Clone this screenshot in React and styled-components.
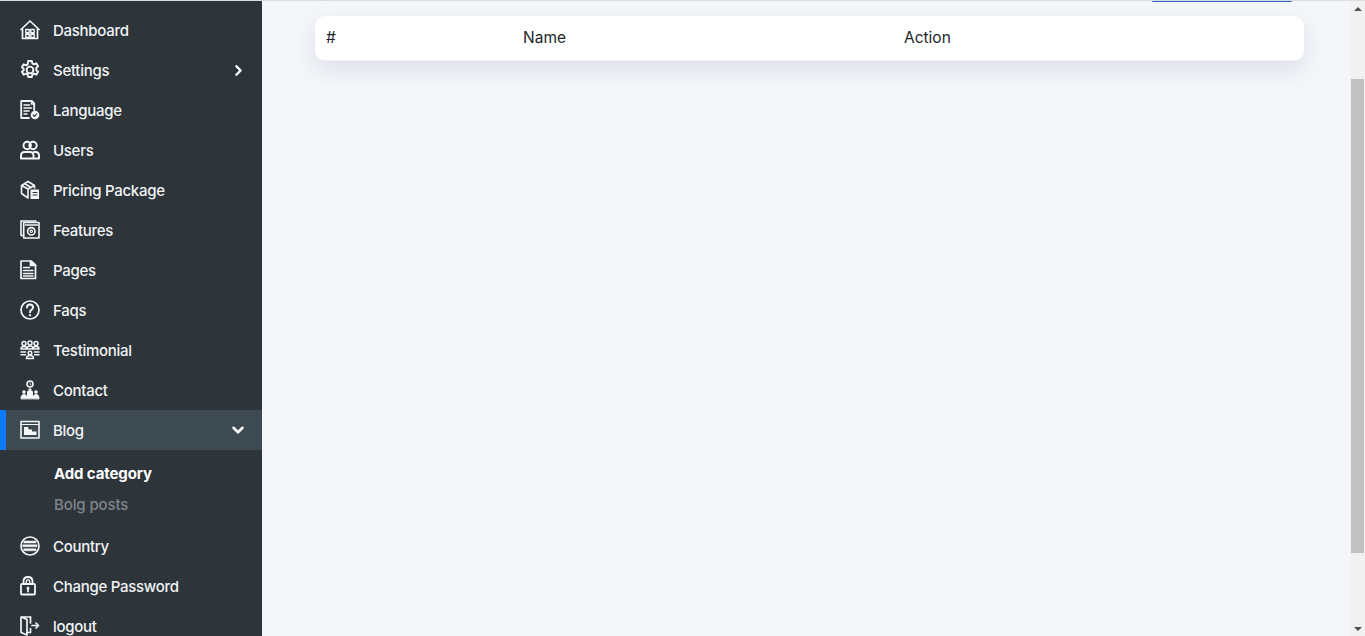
import React from 'react'
import styled, { createGlobalStyle } from 'styled-components'
import { ChevronRight, ChevronDown } from 'lucide-react'

const GlobalStyle = createGlobalStyle`
    html, body {
        margin: 0;
        height: 100%;
        overflow: hidden;
        background: #f4f6fa;
    }
    body {
        font-family: Inter, "Open Sans", "Liberation Sans", sans-serif;
    }
`

const Svg = ({ children }) => (
    <svg width="20" height="20" viewBox="0 0 20 20" fill="none" stroke="#f4f6f7" strokeWidth="1.7" strokeLinejoin="round" strokeLinecap="round">
        {children}
    </svg>
)

const icons = {
    dashboard: (
        <Svg>
            <path d="M1 9.500 L10 1 L19 9.500" />
            <path d="M2.500 9V18.500H17.500V9" />
            <path d="M5.800 9.500h3.400v3.200H5.800zM10.800 9.500h3.400v3.200h-3.400zM5.800 14.300h3.400v3.200H5.800zM10.800 14.300h3.400v3.200h-3.400z" strokeWidth="1.400" />
        </Svg>
    ),
    settings: (
        <Svg>
            <circle cx="10" cy="10" r="3.400" strokeWidth="1.900" />
            <path d="M8.200 1h3.600l.5 2.400 1.700.9 2.300-1 1.800 2.900-1.800 1.600v2.400l1.800 1.600-1.800 2.900-2.300-1-1.700.9-.5 2.400H8.200l-.5-2.400-1.700-.9-2.300 1-1.800-2.900 1.800-1.600V8.800L1.900 7.200l1.800-2.900 2.300 1 1.700-.9z" strokeWidth="1.900" />
        </Svg>
    ),
    language: (
        <Svg>
            <path d="M9 18H1.200V1h10.500l2.500 2.500V10" strokeWidth="1.800" />
            <path d="M11.500 1v3h3" strokeWidth="1.400" />
            <path d="M4 5h5.500M4 8h7.500M4 11h5M4 14h3" strokeWidth="1.500" />
            <circle cx="15" cy="15" r="4.300" fill="#f4f6f7" stroke="none" />
            <path d="M13.200 15l1.300 1.300 2.300-2.400" stroke="#2d353c" strokeWidth="1.100" />
        </Svg>
    ),
    users: (
        <Svg>
            <circle cx="7.200" cy="5.500" r="3.700" strokeWidth="2" />
            <circle cx="13" cy="5.500" r="3.700" strokeWidth="2" />
            <path d="M1 18.500v-2.700c0-2.200 1.500-3.800 3.500-3.800h5.500c2 0 3.500 1.600 3.500 3.800v2.700z" strokeWidth="2" />
            <path d="M14 12h1.500c2 0 3.500 1.600 3.500 3.800v2.700h-5" strokeWidth="2" />
        </Svg>
    ),
    pricing: (
        <Svg>
            <path d="M1.500 5.500L8 1.500l6.500 4v2.500M1.500 5.500v8L8 18M1.500 5.500L8 9v9M8 9l6.500-3.500M4.500 3.500l6.500 4" strokeWidth="1.600" />
            <rect x="10.500" y="9.500" width="8.500" height="9.500" fill="#f4f6f7" stroke="none" />
            <path d="M13 12.500h4M13 15h4" stroke="#2d353c" strokeWidth="1" />
        </Svg>
    ),
    features: (
        <Svg>
            <path d="M3.700 2.500h15.300v15.500H3.700z" strokeWidth="1.600" />
            <path d="M1 1v14.500h2.700M1 1h15" strokeWidth="1.600" />
            <path d="M5.500 5h12" strokeWidth="1.400" />
            <circle cx="11.300" cy="11.300" r="3.700" strokeWidth="1.600" />
            <circle cx="11.300" cy="11.300" r="1.200" strokeWidth="1.100" />
        </Svg>
    ),
    pages: (
        <Svg>
            <path d="M1 1h10l4.500 4v13.500H1z" />
            <path d="M10.500 1v4.500h5" fill="#f4f6f7" />
            <path d="M3.500 7.500h6M3.500 10.500h9.500M3.500 13.500h9.500M3.500 16h9.500" strokeWidth="1.500" />
        </Svg>
    ),
    faqs: (
        <Svg>
            <circle cx="10" cy="10" r="9" />
            <path d="M7 7.600c0-1.800 1.300-3 3-3s3 1.100 3 2.800c0 2.400-3 2.400-3 4.800" strokeWidth="2" />
            <path d="M10 15.200v.1" strokeWidth="2.200" />
        </Svg>
    ),
    testimonial: (
        <Svg>
            <g strokeWidth="1.500">
                <circle cx="4" cy="3.500" r="2" />
                <circle cx="10" cy="3" r="2" />
                <circle cx="16" cy="3.500" r="2" />
                <path d="M1 9c0-1.500 1-2.500 3-2.500s3 1 3 2.500zM7 9c0-2 1-3 3-3s3 1 3 3zM13 9c0-1.500 1-2.500 3-2.500s3 1 3 2.500z" />
                <circle cx="10" cy="13" r="1.800" />
                <path d="M6.500 18.500c0-2 1.300-3 3.500-3s3.500 1 3.500 3z" />
                <path d="M1 12h4.500M1 14.800h4.500M14.500 12H19M14.500 14.800H19" />
            </g>
        </Svg>
    ),
    contact: (
        <Svg>
            <circle cx="10" cy="4" r="3" strokeWidth="1.600" />
            <path d="M10 2.800v1.500l1 .7" strokeWidth="0.900" />
            <path d="M7.500 18.500V11.500h5V18.500z" fill="#f4f6f7" strokeWidth="1" />
            <circle cx="10" cy="10" r="1.700" fill="#f4f6f7" stroke="none" />
            <circle cx="4" cy="12" r="1.800" fill="#f4f6f7" stroke="none" />
            <circle cx="16" cy="12" r="1.800" fill="#f4f6f7" stroke="none" />
            <path d="M1 18.500c0-2.500 1-4 3-4s3 1.500 3 4zM13 18.500c0-2.500 1-4 3-4s3 1.500 3 4z" fill="#f4f6f7" strokeWidth="1" />
        </Svg>
    ),
    blog: (
        <Svg>
            <rect x="1" y="1.500" width="18" height="16.500" strokeWidth="1.600" />
            <path d="M1 4.500h18" strokeWidth="1.200" />
            <path d="M4 7h4l.8 2.500H12V11.500h4.500V15H4z" fill="#f4f6f7" stroke="none" />
        </Svg>
    ),
    country: (
        <Svg>
            <circle cx="10" cy="10" r="9" />
            <path d="M4 5h12v2H4zM3 8.800h14v2H3zM4 12.800h12v2H4z" fill="#f4f6f7" strokeWidth="0.500" />
        </Svg>
    ),
    password: (
        <Svg>
            <path d="M3.500 8V5.500C3.500 2.800 5.300 1 8 1s4.500 1.800 4.500 4.500V8" strokeWidth="1.800" />
            <path d="M6.300 8V5.500C6.300 4.300 6.900 3.700 8 3.700S9.700 4.300 9.700 5.500V8" strokeWidth="1.400" />
            <rect x="1" y="8" width="14" height="10.500" rx="1" strokeWidth="1.800" />
            <circle cx="8" cy="12" r="1.500" fill="#f4f6f7" stroke="none" />
            <path d="M8 12.500v3" strokeWidth="1.800" />
        </Svg>
    ),
    logout: (
        <Svg>
            <path d="M10.500 1H1v15.500l6 2.500V3.500L1.500 1" />
            <path d="M7 16.500h3.500v-4M10.500 7V1" />
            <path d="M12 9.500h5.500M16 7l2.500 2.500L16 12" />
        </Svg>
    ),
}

const menu = [
    { key: 'dashboard', label: 'Dashboard' },
    { key: 'settings', label: 'Settings', chevron: 'right' },
    { key: 'language', label: 'Language' },
    { key: 'users', label: 'Users' },
    { key: 'pricing', label: 'Pricing Package' },
    { key: 'features', label: 'Features' },
    { key: 'pages', label: 'Pages' },
    { key: 'faqs', label: 'Faqs' },
    { key: 'testimonial', label: 'Testimonial' },
    { key: 'contact', label: 'Contact' },
    { key: 'blog', label: 'Blog', chevron: 'down', active: true, children: ['Add category', 'Bolg posts'] },
    { key: 'country', label: 'Country' },
    { key: 'password', label: 'Change Password' },
    { key: 'logout', label: 'logout' },
]

const App = () => {
    return (
        <Page>
            <GlobalStyle />
            <Sidebar>
                {menu.map((item) => (
                    <React.Fragment key={item.key}>
                        <MenuItem $active={item.active}>
                            <IconSlot>{icons[item.key]}</IconSlot>
                            <MenuLabel>{item.label}</MenuLabel>
                            {item.chevron === 'right' && <ChevronRight size={17} strokeWidth={3.4} color="#fff" />}
                            {item.chevron === 'down' && <ChevronDown size={18} strokeWidth={3.4} color="#fff" />}
                        </MenuItem>
                        {item.children && (
                            <SubMenu>
                                {item.children.map((child, i) => (
                                    <SubItem key={child} $current={i === 0}>{child}</SubItem>
                                ))}
                            </SubMenu>
                        )}
                    </React.Fragment>
                ))}
            </Sidebar>
            <Main>
                <TopStrip>
                    <ButtonEdge />
                </TopStrip>
                <TableCard>
                    <HeadCell>#</HeadCell>
                    <HeadCell>Name</HeadCell>
                    <HeadCell>Action</HeadCell>
                </TableCard>
            </Main>
            <Scrollbar>
                <ScrollArrow $up />
                <ScrollTrack>
                    <ScrollThumb />
                </ScrollTrack>
                <ScrollArrow />
            </Scrollbar>
        </Page>
    )
}

export default App

const Page = styled.div`
    display: flex;
    height: 636px;
    box-sizing: border-box;
    border-top: 1px solid #dadde3;
    overflow: hidden;
`

const Sidebar = styled.nav`
    width: 262px;
    flex-shrink: 0;
    box-sizing: border-box;
    padding-top: 9px;
    background-color: #2d353b;
    overflow: hidden;
`

const MenuItem = styled.div`
    display: flex;
    align-items: center;
    height: 40px;
    box-sizing: border-box;
    padding: 0 15px 0 ${(props) => (props.$active ? '14px' : '20px')};
    border-left: ${(props) => (props.$active ? '6px solid #0a7cff' : 'none')};
    background-color: ${(props) => (props.$active ? '#3d4a51' : 'transparent')};
    color: #f2f4f5;
    font-size: 15px;
    font-weight: 500;
`

const IconSlot = styled.span`
    display: flex;
    width: 20px;
    height: 20px;
    margin-right: 13px;
`

const MenuLabel = styled.span`
    flex: 1;
    letter-spacing: -0.28px;
`

const SubMenu = styled.div`
    display: flex;
    flex-direction: column;
    gap: 9px;
    padding: 13px 0 10px 54px;
`

const SubItem = styled.div`
    height: 22px;
    line-height: 22px;
    font-size: 15px;
    letter-spacing: -0.12px;
    font-weight: ${(props) => (props.$current ? 700 : 500)};
    color: ${(props) => (props.$current ? '#ffffff' : '#7f8488')};
`

const Main = styled.main`
    flex: 1;
    min-width: 0;
    padding: 0 46px 0 53px;
    background-color: #f4f6fa;
`

const TopStrip = styled.div`
    display: flex;
    justify-content: flex-end;
    height: 15px;
    padding-right: 12px;
`

const ButtonEdge = styled.div`
    width: 140px;
    height: 1px;
    border-radius: 0 0 3px 3px;
    background-color: #2f62c9;
`

const TableCard = styled.div`
    display: grid;
    grid-template-columns: 197px 381px 1fr;
    align-items: center;
    height: 45px;
    box-sizing: border-box;
    padding: 0 0 2px 11px;
    border-bottom: 1px solid #f5f3ef;
    border-radius: 10px;
    background-color: #fff;
    box-shadow: 0 9px 22px rgba(40, 45, 70, 0.11);
`

const HeadCell = styled.div`
    font-size: 15.5px;
    font-weight: 400;
    color: #212529;
`

const Scrollbar = styled.div`
    display: flex;
    flex-direction: column;
    width: 15px;
    flex-shrink: 0;
    background-color: #f1f1f1;
`

const ScrollArrow = styled.div`
    height: 15px;
    flex-shrink: 0;
    display: flex;
    align-items: center;
    justify-content: center;

    &::before {
        content: '';
        border-left: 4px solid transparent;
        border-right: 4px solid transparent;
        ${(props) => (props.$up ? 'border-bottom' : 'border-top')}: 4px solid #505050;
    }
`

const ScrollTrack = styled.div`
    flex: 1;
    padding-top: 63px;
`

const ScrollThumb = styled.div`
    height: 474px;
    margin: 0 1px;
    background-color: #c1c1c1;
`
